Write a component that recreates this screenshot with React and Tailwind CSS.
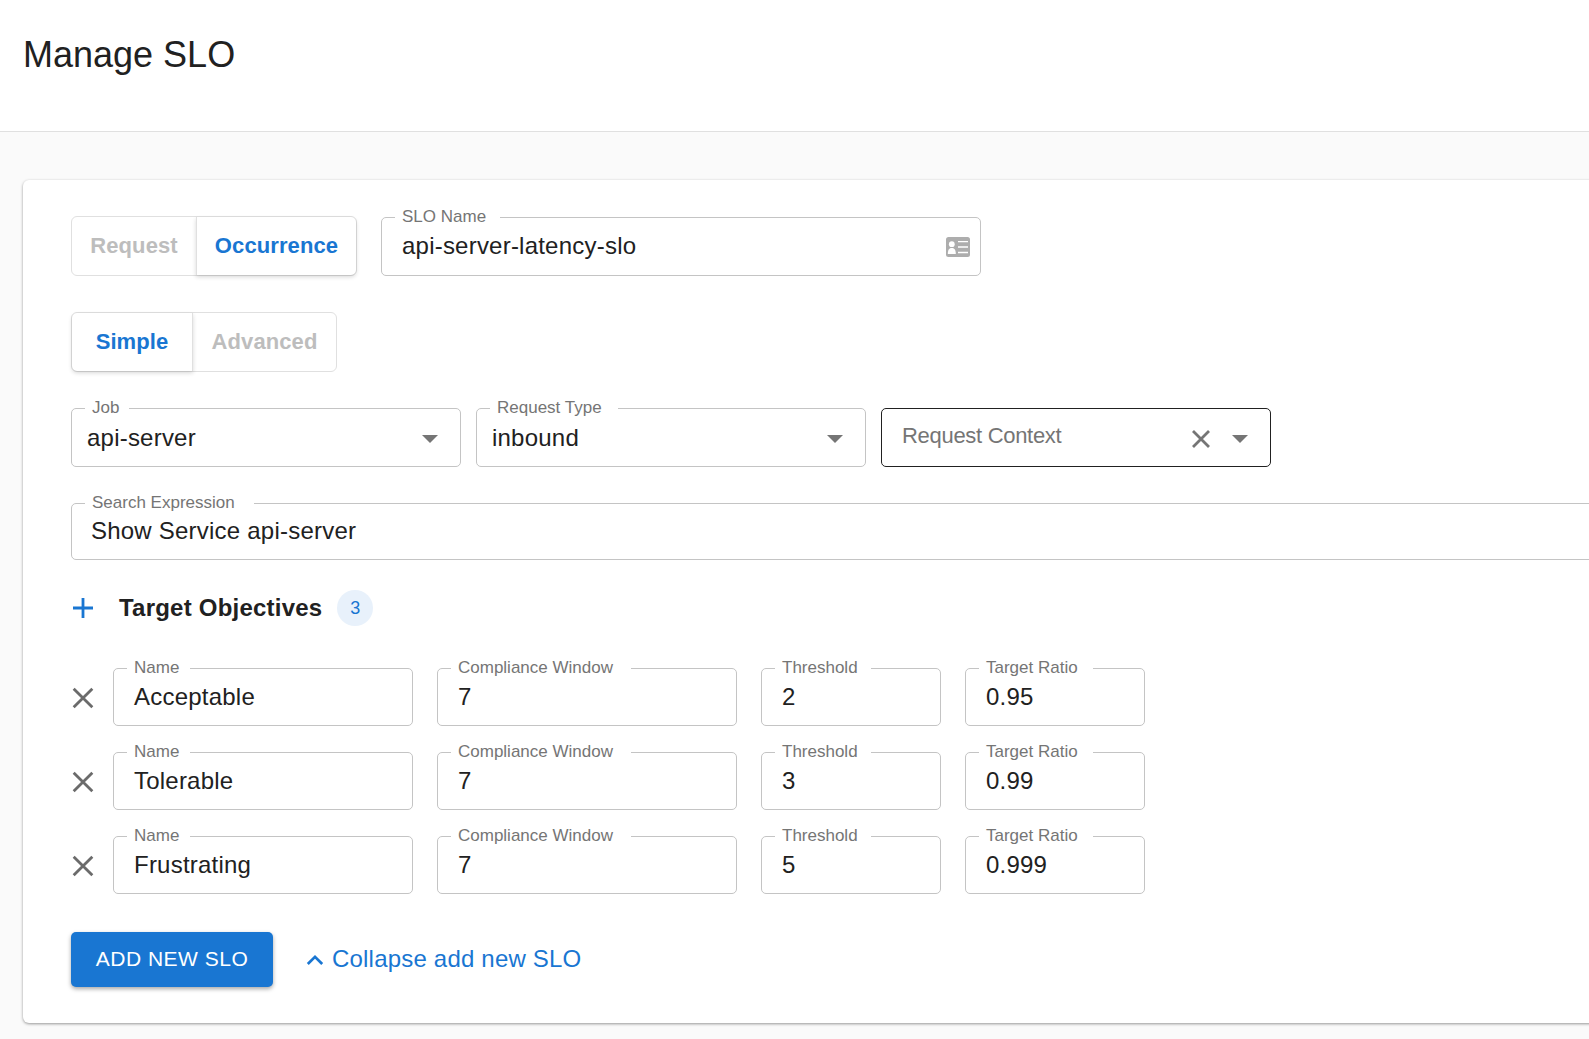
import React from "react";

const Close = ({ className, sw = 2.4 }) => (
  <svg viewBox="0 0 24 24" className={className} fill="none" stroke="currentColor" strokeWidth={sw}>
    <path d="M4 4 L20 20 M20 4 L4 20" />
  </svg>
);

const Caret = () => (
  <svg viewBox="0 0 16 8" className="w-[16px] h-[8px] text-[#757575]" fill="currentColor">
    <path d="M0 0 H16 L8 8 Z" />
  </svg>
);

const ContactCard = ({ className }) => (
  <svg viewBox="0 0 24 20" className={className}>
    <rect x="0" y="0" width="24" height="20" rx="2.5" fill="#adadad" />
    <circle cx="5.8" cy="7.2" r="2.9" fill="#fff" />
    <path d="M1.8 17 C1.8 12.5 3.5 11 5.8 11 C8.1 11 9.8 12.5 9.8 17 Z" fill="#fff" />
    <path d="M12 4.6 H22 M12 10 H22 M12 15.5 H22" stroke="#fff" strokeWidth="1.4" />
  </svg>
);

const Field = ({ label, value, className, gap = "pr-[15px]", inputClass = "pl-[20px] pb-[1px]", children }) => (
  <div className={`relative flex items-center border border-[#c4c4c4] rounded-[5px] bg-white ${className}`}>
    <span className={`absolute left-[13px] top-[-11px] bg-white pl-[7px] text-[17px] leading-[20px] text-[#757575] whitespace-nowrap ${gap}`}>
      {label}
    </span>
    <span className={`text-[24px] leading-none tracking-[0.22px] text-[#212121] whitespace-nowrap ${inputClass}`}>{value}</span>
    {children}
  </div>
);

const Toggle = ({ active, children, className }) => (
  <div
    className={`flex items-center justify-center h-full pb-[2px] text-[22px] font-bold tracking-[0.1px] ${
      active ? "text-[#1976d2] shadow-[0_2px_4px_rgba(0,0,0,0.16)]" : "text-[#bdbdbd]"
    } ${className}`}
  >
    {children}
  </div>
);

const rows = [
  ["Acceptable", "7", "2", "0.95"],
  ["Tolerable", "7", "3", "0.99"],
  ["Frustrating", "7", "5", "0.999"],
];

export default function App() {
  return (
    <div className="h-screen overflow-hidden bg-[#fafafa] font-['Liberation_Sans',Arial,sans-serif]">
      <header className="h-[132px] bg-white border-b border-[#e0e0e0] pl-[23px] pt-[32px]">
        <h1 className="text-[36px] leading-[46px] text-[#212121]">Manage SLO</h1>
      </header>
      <main className="pl-[23px] pt-[48px]">
        <section className="w-[1700px] h-[843px] bg-white rounded-[6px] shadow-[0_1px_3px_rgba(0,0,0,0.4)] pl-[48px] pt-[36px]">
          <div className="flex items-start">
            <div className="flex w-[286px] h-[60px] border border-[#e0e0e0] rounded-[6px]">
              <Toggle className="w-[124px]">Request</Toggle>
              <Toggle active className="w-[160px] border-l border-[#e0e0e0] rounded-r-[5px]">Occurrence</Toggle>
            </div>
            <Field label="SLO Name" gap="pr-[14px]" value="api-server-latency-slo" className="w-[600px] h-[59px] ml-[24px] mt-[1px]">
              <ContactCard className="absolute right-[10px] top-[19px] w-[24px] h-[20px]" />
            </Field>
          </div>

          <div className="flex w-[266px] h-[60px] mt-[36px] border border-[#e0e0e0] rounded-[6px]">
            <Toggle active className="w-[121px] border-r border-[#e0e0e0] rounded-l-[5px]">Simple</Toggle>
            <Toggle className="w-[143px]">Advanced</Toggle>
          </div>

          <div className="flex gap-[15px] mt-[36px]">
            <Field label="Job" gap="pr-[10px]" value="api-server" inputClass="pl-[15px]" className="w-[390px] h-[59px]">
              <span className="absolute right-[22px] top-[26px] flex"><Caret /></span>
            </Field>
            <Field label="Request Type" gap="pr-[16px]" value="inbound" inputClass="pl-[15px]" className="w-[390px] h-[59px]">
              <span className="absolute right-[22px] top-[26px] flex"><Caret /></span>
            </Field>
            <div className="relative flex items-center w-[390px] h-[59px] border border-[#212121] rounded-[5px] pl-[20px] pb-[4px]">
              <span className="text-[22px] text-[#757575] tracking-[-0.3px]">Request Context</span>
              <Close sw={2.8} className="absolute right-[57px] top-[18px] w-[24px] h-[24px] text-[#757575]" />
              <span className="absolute right-[22px] top-[26px] flex"><Caret /></span>
            </div>
          </div>

          <Field label="Search Expression" gap="pr-[19px]" value="Show Service api-server" inputClass="pl-[19px] pb-[1px]" className="w-[1640px] h-[57px] mt-[36px]" />

          <div className="flex items-center h-[36px] mt-[30px]">
            <svg viewBox="0 0 24 24" className="w-[24px] h-[24px] text-[#1976d2]" fill="none" stroke="currentColor" strokeWidth="2.8">
              <path d="M12 2 V22 M2 12 H22" />
            </svg>
            <h2 className="ml-[24px] text-[24px] font-bold text-[#212121] tracking-[0.22px]">Target Objectives</h2>
            <span className="ml-[15px] w-[36px] h-[36px] rounded-full bg-[#e8f1fb] text-[#1976d2] text-[18px] flex items-center justify-center">3</span>
          </div>

          <div className="flex flex-col gap-[26px] mt-[42px]">
            {rows.map(([name, win, th, ratio]) => (
              <div key={name} className="flex items-center">
                <Close className="w-[28px] h-[28px] mt-[2px] text-[#6b6b6b] -ml-[2px] mr-[16px]" />
                <Field label="Name" gap="pr-[11px]" value={name} inputClass="pl-[20px]" className="w-[300px] h-[58px]" />
                <Field label="Compliance Window" gap="pr-[18px]" value={win} inputClass="pl-[20px]" className="w-[300px] h-[58px] ml-[24px]" />
                <Field label="Threshold" gap="pr-[13px]" value={th} inputClass="pl-[20px]" className="w-[180px] h-[58px] ml-[24px]" />
                <Field label="Target Ratio" gap="pr-[15px]" value={ratio} inputClass="pl-[20px]" className="w-[180px] h-[58px] ml-[24px]" />
              </div>
            ))}
          </div>

          <div className="flex items-center mt-[38px]">
            <button className="w-[202px] h-[55px] pb-[2px] bg-[#1976d2] text-white text-[21px] rounded-[5px] tracking-[0.5px] shadow-[0_2px_4px_rgba(0,0,0,0.35)]">
              ADD NEW SLO
            </button>
            <svg viewBox="0 0 20 12" className="ml-[33px] mb-[1px] w-[18px] h-[11px] text-[#1976d2]" fill="none" stroke="currentColor" strokeWidth="3">
              <path d="M2 11 L10 3 L18 11" />
            </svg>
            <a className="ml-[8px] pb-[2px] text-[24px] tracking-[0.2px] text-[#1976d2]">Collapse add new SLO</a>
          </div>
        </section>
      </main>
    </div>
  );
}
